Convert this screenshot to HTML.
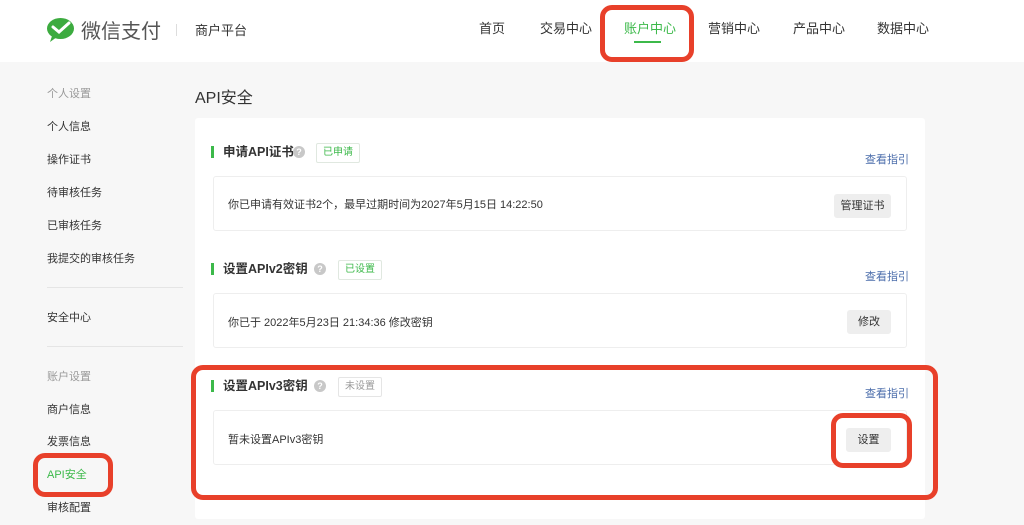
<!DOCTYPE html>
<html><head><meta charset="utf-8"><style>
*{margin:0;padding:0;box-sizing:border-box}
body{width:1024px;height:525px;overflow:hidden;background:#f7f7f7;font-family:"Liberation Sans","Noto Sans CJK SC",sans-serif;color:#333;position:relative}
.a{position:absolute;white-space:nowrap}
.hdr{position:absolute;left:0;top:0;width:1024px;height:62px;background:#fff}
.nav{font-size:13px;color:#333;top:18px}
.sb{font-size:11px;color:#333;left:47px}
.sbg{color:#999}
.card{position:absolute;left:195px;top:118px;width:730px;height:401px;background:#fff;border-radius:3px}
.ttl{font-size:12.5px;font-weight:bold;color:#333;padding-left:9px;border-left:3px solid #3cb94a;line-height:12px}
.q{width:12px;height:12px;border-radius:50%;background:#c8c8c8;color:#fff;font-size:9px;text-align:center;line-height:12px;font-weight:bold}
.tag{font-size:10px;border:1px solid #e0e8e0;border-radius:2px;padding:0 6px;height:20px;line-height:18px;color:#3cb94a}
.box{position:absolute;left:213px;width:694px;height:55px;border:1px solid #eee;border-radius:3px;background:#fff}
.txt{font-size:11px;color:#333}
.lnk{font-size:11px;color:#4b6dab}
.btn{height:24px;line-height:24px;background:#eee;border-radius:3px;font-size:11px;color:#333;text-align:center}
.red{position:absolute;border:5px solid #e8402a;border-radius:12px}
.line{position:absolute;height:1px;background:#e5e5e5;left:47px;width:136px}
</style></head><body>
<div class="hdr"></div>
<svg class="a" style="left:46px;top:17px" width="30" height="26" viewBox="0 0 30 26"><ellipse cx="14.5" cy="11.5" rx="13.5" ry="10.5" fill="#3cab3f"/><path d="M6 19 L4 25 L11 20 Z" fill="#3cab3f"/><path d="M7 10 L13 15 L23 6" stroke="#fff" stroke-width="3" fill="none" stroke-linecap="round"/></svg>
<div class="a" style="left:81px;top:15px;font-size:20px;color:#555">微信支付</div>
<div class="a" style="left:176px;top:24px;width:1px;height:12px;background:#ddd"></div>
<div class="a" style="left:195px;top:20px;font-size:13px;color:#333">商户平台</div>
<div class="a nav" style="left:479px">首页</div>
<div class="a nav" style="left:540px">交易中心</div>
<div class="a nav" style="left:624px;color:#3cb94a">账户中心</div>
<div class="a" style="left:634px;top:41px;width:27px;height:2px;background:#3cb94a"></div>
<div class="a nav" style="left:708px">营销中心</div>
<div class="a nav" style="left:793px">产品中心</div>
<div class="a nav" style="left:877px">数据中心</div>

<div class="a sb sbg" style="top:85px">个人设置</div>
<div class="a sb" style="top:118px">个人信息</div>
<div class="a sb" style="top:151px">操作证书</div>
<div class="a sb" style="top:184px">待审核任务</div>
<div class="a sb" style="top:217px">已审核任务</div>
<div class="a sb" style="top:250px">我提交的审核任务</div>
<div class="line" style="top:287px"></div>
<div class="a sb" style="top:309px">安全中心</div>
<div class="line" style="top:346px"></div>
<div class="a sb sbg" style="top:368px">账户设置</div>
<div class="a sb" style="top:401px">商户信息</div>
<div class="a sb" style="top:433px">发票信息</div>
<div class="a sb" style="top:466px;color:#3cb94a">API安全</div>
<div class="a sb" style="top:499px">审核配置</div>

<div class="a" style="left:195px;top:84px;font-size:16px;color:#333">API安全</div>
<div class="card"></div>

<div class="a ttl" style="left:211px;top:146px">申请API证书</div>
<div class="a q" style="left:293px;top:146px">?</div>
<div class="a tag" style="left:316px;top:143px">已申请</div>
<div class="a lnk" style="left:865px;top:151px">查看指引</div>
<div class="box" style="top:176px"></div>
<div class="a txt" style="left:228px;top:196px">你已申请有效证书2个，最早过期时间为2027年5月15日 14:22:50</div>
<div class="a btn" style="left:834px;top:194px;width:57px">管理证书</div>

<div class="a ttl" style="left:211px;top:263px">设置APIv2密钥</div>
<div class="a q" style="left:314px;top:263px">?</div>
<div class="a tag" style="left:338px;top:260px">已设置</div>
<div class="a lnk" style="left:865px;top:268px">查看指引</div>
<div class="box" style="top:293px"></div>
<div class="a txt" style="left:228px;top:314px">你已于 2022年5月23日 21:34:36 修改密钥</div>
<div class="a btn" style="left:847px;top:310px;width:44px">修改</div>

<div class="a ttl" style="left:211px;top:380px">设置APIv3密钥</div>
<div class="a q" style="left:314px;top:380px">?</div>
<div class="a tag" style="left:338px;top:377px;color:#999;border-color:#e5e5e5">未设置</div>
<div class="a lnk" style="left:865px;top:385px">查看指引</div>
<div class="box" style="top:410px"></div>
<div class="a txt" style="left:228px;top:431px">暂未设置APIv3密钥</div>
<div class="a btn" style="left:846px;top:428px;width:45px">设置</div>

<div class="red" style="left:600px;top:5px;width:94px;height:57px"></div>
<div class="red" style="left:33px;top:453px;width:80px;height:44px"></div>
<div class="red" style="left:191px;top:365px;width:747px;height:135px"></div>
<div class="red" style="left:831px;top:413px;width:81px;height:55px"></div>
</body></html>
